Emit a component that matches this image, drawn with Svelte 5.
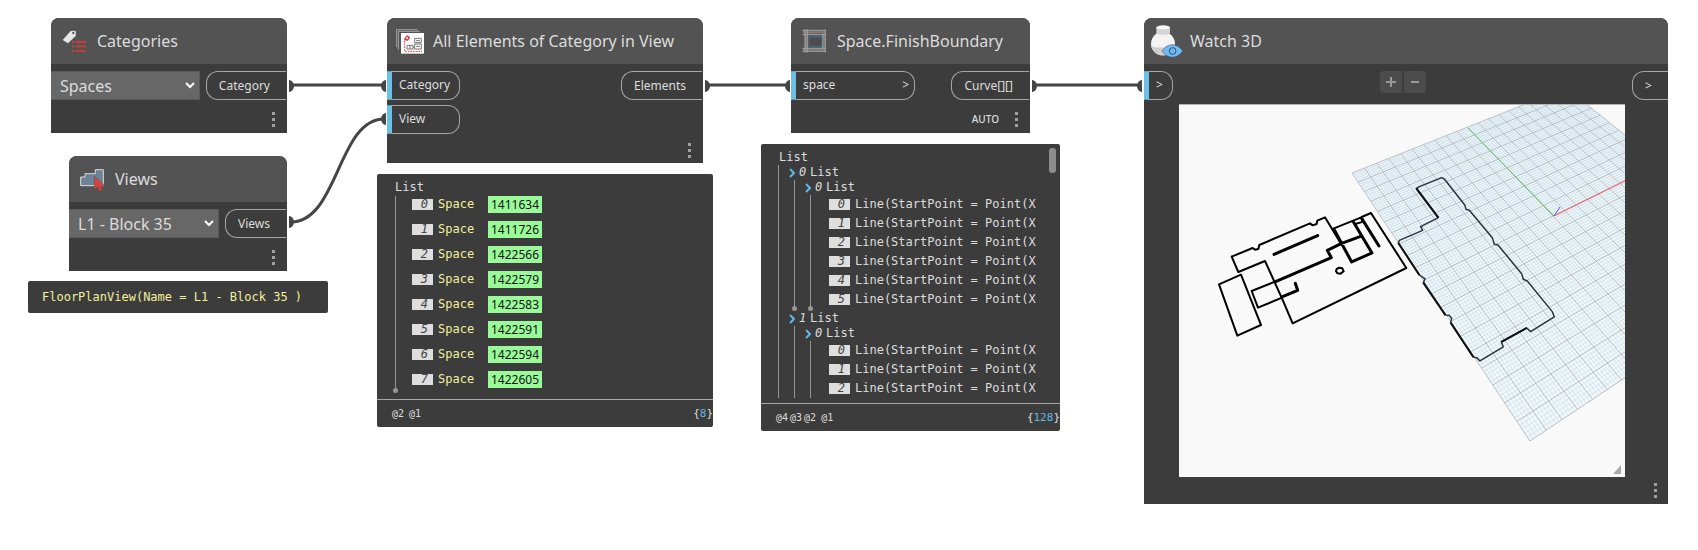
<script>
  const spaces = ['1411634', '1411726', '1422566', '1422579', '1422583', '1422591', '1422594', '1422605'];
  const curves = [
    { index: 0, items: [0, 1, 2, 3, 4, 5], closed: true },
    { index: 1, items: [0, 1, 2], closed: false },
  ];
  const lineText = 'Line(StartPoint = Point(X';

  // Ground grid: a unit square projected onto the four screen corners.
  const corners = [[1352, 172], [1530, 440], [1791, 266], [1566, 87]];

  function projector([p0, p1, p2, p3]) {
    const dx1 = p1[0] - p2[0], dx2 = p3[0] - p2[0], sx = p0[0] - p1[0] + p2[0] - p3[0];
    const dy1 = p1[1] - p2[1], dy2 = p3[1] - p2[1], sy = p0[1] - p1[1] + p2[1] - p3[1];
    const det = dx1 * dy2 - dx2 * dy1;
    const g = (sx * dy2 - dx2 * sy) / det;
    const h = (dx1 * sy - sx * dy1) / det;
    const a = p1[0] - p0[0] + g * p1[0], b = p3[0] - p0[0] + h * p3[0];
    const d = p1[1] - p0[1] + g * p1[1], e = p3[1] - p0[1] + h * p3[1];
    return (u, v) => {
      const w = g * u + h * v + 1;
      return ((a * u + b * v + p0[0]) / w).toFixed(1) + ' ' + ((d * u + e * v + p0[1]) / w).toFixed(1);
    };
  }

  const project = projector(corners);

  function gridPath(count, skip) {
    let d = '';
    for (let i = 0; i <= count; i++) {
      if (skip && i % skip === 0) continue;
      const t = i / count;
      d += `M${project(t, 0)}L${project(t, 1)}M${project(0, t)}L${project(1, t)}`;
    }
    return d;
  }

  const minorGrid = gridPath(100, 5);
  const majorGrid = gridPath(20, 0);
</script>

{#snippet more(label)}
  <button class="more" aria-label={label}><i></i><i></i><i></i></button>
{/snippet}

{#snippet chevron()}
  <svg class="caret" viewBox="0 0 10 7" aria-hidden="true"><path d="M1 1l4 4 4-4" fill="none" stroke="#fff" stroke-width="2" /></svg>
{/snippet}

{#snippet expander()}
  <svg class="expander" viewBox="0 0 6 10" aria-hidden="true"><path d="M1 1l4 4-4 4" fill="none" stroke="#5fb7e5" stroke-width="2" /></svg>
{/snippet}

<main class="workspace">
  <svg class="wires" aria-hidden="true">
    <g fill="none" stroke="#454545" stroke-width="3">
      <path d="M291 85H384" />
      <path d="M291 222C338 222 338 119 384 119" />
      <path d="M706 85H788" />
      <path d="M1033 85H1141" />
    </g>
    <g fill="#454545">
      <path d="M289 80a5 6 0 0 1 0 12zM289 216a5 6 0 0 1 0 12zM705 80a5 6 0 0 1 0 12zM1032 80a5 6 0 0 1 0 12z" />
      <path d="M386 80a5 6 0 0 0 0 12zM386 113a5 6 0 0 0 0 12zM790 80a5 6 0 0 0 0 12zM1142 80a5 6 0 0 0 0 12z" />
    </g>
  </svg>

  <section class="node categories">
    <header>
      <span class="icon">
        <svg width="24" height="24" viewBox="0 0 72 72" aria-hidden="true">
          <path d="M2 33L26 6l12-1 4 3-1 13L18 43z" fill="#e6e6e6" />
          <circle cx="34" cy="12" r="3.500" fill="#535353" />
          <path d="M30 36h7v6h-7zM42 36h30v6H42zM30 49h7v6h-7zM42 49h30v6H42zM30 63h7v6h-7zM42 63h30v6H42z" fill="#c23f3f" />
        </svg>
      </span>
      <h2>Categories</h2>
    </header>
    <div class="row">
      <label class="picker"><select aria-label="Category"><option>Spaces</option></select>{@render chevron()}</label>
      <span class="port out">Category</span>
    </div>
    <footer>{@render more('Categories options')}</footer>
  </section>

  <section class="node views">
    <header>
      <span class="icon">
        <svg width="24" height="24" viewBox="0 0 72 72" aria-hidden="true">
          <path d="M2 56V30h13V20h31V8h24v48z" fill="#6c8296" stroke="#dcdcdc" stroke-width="3" />
          <path d="M43 28v40l10-8 6 12 9-4-6-12h13z" fill="#d04540" stroke="#5a3a3a" stroke-width="1" />
        </svg>
      </span>
      <h2>Views</h2>
    </header>
    <div class="row">
      <label class="picker"><select aria-label="View"><option>L1 - Block 35</option></select>{@render chevron()}</label>
      <span class="port out">Views</span>
    </div>
    <footer>{@render more('Views options')}</footer>
  </section>

  <output class="preview">FloorPlanView(Name = L1 - Block 35 )</output>

  <section class="node elements">
    <header>
      <span class="icon">
        <svg width="28" height="25" viewBox="0 0 84 75" aria-hidden="true">
          <path d="M1 54V1h64M7 62V7h64" fill="none" stroke="#a5a5a5" stroke-width="3" />
          <path d="M4 58V4h64" fill="none" stroke="#777" stroke-width="2" />
          <path d="M15 12h69v62H15z" fill="#fff" />
          <path d="M24 34l2-8 8-8 9 8-8 9z" fill="#c94545" />
          <path d="M31 25h5v5h-5z" fill="#fff" />
          <path d="M26 36v31h52" fill="none" stroke="#c94545" stroke-width="3" stroke-dasharray="5 3" />
          <path d="M33 49h18v11H33zM42 49v11M56 28h20v13H56zM56 45h20v15H56zM60 35h12M60 52h12M51 55h5" fill="none" stroke="#777" stroke-width="3" />
        </svg>
      </span>
      <h2>All Elements of Category in View</h2>
    </header>
    <div class="row">
      <div class="inputs">
        <span class="port in">Category</span>
        <span class="port in">View</span>
      </div>
      <span class="port out">Elements</span>
    </div>
    <footer>{@render more('All Elements of Category in View options')}</footer>
  </section>

  <section class="panel spaces">
    <div class="title">List</div>
    <ul class="flat">
      {#each spaces as id, i}
        <li><span class="index">{i}</span><span class="kind">Space</span><a href="#{id}">{id}</a></li>
      {/each}
    </ul>
    <footer>
      <span class="levels"><span>@2</span><span class="last">@1</span></span>
      <span>{'{'}<b>8</b>{'}'}</span>
    </footer>
  </section>

  <section class="node boundary">
    <header>
      <span class="icon">
        <svg width="24" height="24" viewBox="0 0 72 72" aria-hidden="true">
          <path d="M3 10h66M3 62h66M66 3v66M12 3v66" stroke="#7c7c7c" stroke-width="7" />
          <path d="M1 4h70M1 17h70M1 58h70M1 67h70M9 1v70M16 1v70M70 1v70M62 17v41" fill="none" stroke="#a2a2a2" stroke-width="3" />
          <path d="M21 24h39v28H21z" fill="#4c4c4c" stroke="#3d78a8" stroke-width="3" stroke-dasharray="6 3" />
        </svg>
      </span>
      <h2>Space.FinishBoundary</h2>
    </header>
    <div class="row">
      <span class="port in wide">space <span>&gt;</span></span>
      <span class="port out">Curve[][]</span>
    </div>
    <footer><span class="lacing">AUTO</span>{@render more('Space.FinishBoundary options')}</footer>
  </section>

  <section class="panel curves">
    <div class="title">List</div>
    <ul class="tree">
      {#each curves as group}
        <li class="branch">
          <div class="entry">{@render expander()}<em>{group.index}</em>List</div>
          <ul class:closed={group.closed}>
            <li>
              <div class="entry">{@render expander()}<em>0</em>List</div>
              <ul class:closed={group.closed}>
                {#each group.items as item}
                  <li class="leaf"><span class="index">{item}</span>{lineText}</li>
                {/each}
              </ul>
            </li>
          </ul>
        </li>
      {/each}
    </ul>
    <span class="thumb"></span>
    <footer>
      <span class="levels"><span>@4</span><span>@3</span><span>@2</span><span class="last">@1</span></span>
      <span>{'{'}<b>128</b>{'}'}</span>
    </footer>
  </section>

  <section class="node watch">
    <header>
      <span class="icon">
        <svg width="32" height="33" viewBox="0 0 96 99" aria-hidden="true">
          <path d="M17 25C6 33 0 44 0 56c0 20 16 35 36 35s36-15 36-35c0-12-6-23-16-30z" fill="#f4f4f4" />
          <path d="M1 62c10 9 60 6 70 0-3 18-17 29-35 29S4 80 1 62z" fill="#cfcfcf" />
          <path d="M16 6v19c6 6 35 6 41 0V6z" fill="#d5d5d5" />
          <ellipse cx="36.500" cy="7" rx="20.500" ry="6" fill="#fafafa" />
          <path d="M33 78c18-25 44-25 62 0-18 25-44 25-62 0z" fill="#6cbcfa" stroke="#535353" stroke-width="2" />
          <circle cx="65" cy="78" r="10" fill="#6cbcfa" stroke="#3f4d59" stroke-width="3" />
        </svg>
      </span>
      <h2>Watch 3D</h2>
    </header>
    <div class="row">
      <span class="port in tiny">&gt;</span>
      <div class="zoom">
        <button aria-label="Zoom in"><svg viewBox="0 0 10 10"><path d="M5 0v10M0 5h10" stroke="#999" stroke-width="2" /></svg></button>
        <button aria-label="Zoom out"><svg viewBox="0 0 10 10"><path d="M1 5h8" stroke="#999" stroke-width="2" /></svg></button>
      </div>
      <span class="port out tiny">&gt;</span>
    </div>
    <svg class="scene" viewBox="1179 104 446 372" role="img" aria-label="3D preview">
      <polygon points={corners.map((c) => c.join(',')).join(' ')} fill="#f2f7fa" />
      <path d={minorGrid} fill="none" stroke="#bdd7e5" stroke-width="0.500" />
      <path d={majorGrid} fill="none" stroke="#8f9ba3" stroke-width="0.600" />
      <path d="M1554 215L1468 127" stroke="#5cb85c" />
      <path d="M1554 215L1625 180" stroke="#f55" />
      <path d="M1554 215L1560 206" stroke="#55f" />
      <g transform="translate(1340 100) scale(0.3333)" fill="none" stroke="#2c343b" stroke-width="4.500" stroke-linejoin="round">
        <path d="M229 262L240 256 305 230 313 234 375 313 378 325 388 328 457 410 463 430 474 432 545 518 550 535 562 540 637 632 643 648 572 692 560 681 484 723 490 738 420 780 410 770 400 768 332 665 335 652 327 643 316 642 250 545 255 534 238 522 175 426 178 418 248 388 242 377 295 350z" />
        <path d="M229 262L295 350M560 681L484 723M400 768L332 665M316 642L250 545M238 522L175 426" stroke="#111" stroke-width="6" />
      </g>
      <g transform="translate(1170 190) scale(0.3333)" fill="none" stroke="#000" stroke-width="6" stroke-linejoin="round" stroke-linecap="round">
        <path d="M185 197L248 171 255 176 265 174 268 162 420 97 428 103 440 99 442 89 465 79 513 158M185 197L205 243 285 210 336 322 368 397 709 231 603 66 575 78" />
        <path d="M147 280L213 251 273 402 202 434zM315 272L245 300 264 350 336 320" />
        <path d="M490 113L572 80 580 92 556 99M500 234L508 230 517 232 521 241 512 248 502 247 498 240z" />
        <path d="M312 190L443 134M315 273L484 200 472 178 513 158 572 136M336 318L383 298 376 277M492 115L545 213 606 186 550 92M577 85L627 165" stroke-width="9" />
      </g>
      <path d="M1621 464v9h-8z" fill="#aaa" />
    </svg>
    <footer>{@render more('Watch 3D options')}</footer>
  </section>
</main>

<style>
  :global(body) {
    margin: 0;
    background: #fff;
  }
  .workspace {
    position: relative;
    min-height: 100vh;
    min-width: 1680px;
    font-family: 'Noto Sans', sans-serif;
    color: #dcdcdc;
  }
  .workspace *,
  .workspace *::after {
    box-sizing: border-box;
  }
  .wires {
    position: absolute;
    inset: 0;
    width: 100%;
    height: 100%;
  }

  .node,
  .panel,
  .preview {
    position: absolute;
    background: #3c3c3c;
  }
  .node {
    border-radius: 8px 8px 0 0;
    display: flex;
    flex-direction: column;
  }
  .categories { left: 51px; top: 18px; width: 236px; }
  .views { left: 69px; top: 156px; width: 218px; }
  .elements { left: 387px; top: 18px; width: 316px; }
  .boundary { left: 791px; top: 18px; width: 239px; }
  .watch { left: 1144px; top: 18px; width: 524px; }
  .preview { left: 28px; top: 281px; }
  .panel.spaces { left: 377px; top: 174px; width: 336px; }
  .panel.curves { left: 761px; top: 144px; width: 299px; }

  .node header {
    display: flex;
    align-items: center;
    height: 46px;
    background: #535353;
    border-radius: 8px 8px 0 0;
  }
  .icon {
    display: grid;
    place-items: center;
    width: 46px;
  }
  h2 {
    margin: 0;
    font-size: 16px;
    line-height: 24px;
    font-weight: 400;
    white-space: nowrap;
  }
  .row {
    display: flex;
    align-items: flex-start;
    justify-content: space-between;
    gap: 6px;
    padding-top: 7px;
  }
  .picker {
    position: relative;
    flex: 1;
  }
  select {
    appearance: none;
    display: block;
    width: 100%;
    height: 29px;
    padding: 0 24px 0 9px;
    border: 1px solid #5a5a5a;
    border-left: 0;
    border-radius: 0;
    background: #676767;
    color: #dcdcdc;
    font: 16px 'Noto Sans', sans-serif;
  }
  .caret {
    position: absolute;
    right: 5px;
    top: 11px;
    width: 10px;
    height: 7px;
  }
  .port {
    display: flex;
    align-items: center;
    height: 29px;
    border: 1px solid #a6a6a6;
    font-size: 12px;
    line-height: 16px;
    white-space: nowrap;
  }
  .port.out {
    margin-right: 1px;
    padding: 0 16px 0 12px;
    border-right: 0;
    border-radius: 12px 0 0 12px;
  }
  .port.in {
    justify-content: space-between;
    padding: 0 9px 2px 7px;
    border-left: 5px solid #6ac0e7;
    border-radius: 0 12px 12px 0;
  }
  .port.wide {
    width: 124px;
    padding-right: 5px;
  }
  .port.in.tiny {
    width: 29px;
  }
  .port.out.tiny {
    width: 36px;
    margin-right: 0;
  }
  .inputs {
    display: grid;
    gap: 5px;
  }
  .node footer {
    display: flex;
    align-items: center;
    justify-content: flex-end;
    height: 33px;
    padding: 5px 8px 0 0;
  }
  .elements footer {
    height: 29px;
    padding-top: 3px;
  }
  .watch footer {
    height: 27px;
    padding: 0 7px 0 0;
  }
  .lacing {
    margin-right: 12px;
    font-size: 10px;
    font-weight: 500;
    line-height: 14px;
  }
  button {
    border: 0;
    padding: 0;
    cursor: pointer;
  }
  .more {
    display: grid;
    gap: 3px;
    justify-items: center;
    width: 11px;
    background: none;
  }
  .more i {
    width: 3px;
    height: 3px;
    background: #a0a0a0;
  }
  .zoom {
    display: flex;
    gap: 2px;
  }
  .zoom button {
    display: grid;
    place-items: center;
    width: 22px;
    height: 22px;
    background: #4c4c4c;
    border-radius: 4px 0 0 4px;
  }
  .zoom button + button {
    border-radius: 0 4px 4px 0;
  }
  .zoom svg {
    width: 10px;
    height: 10px;
  }
  .scene {
    display: block;
    margin: 4px 43px 0 35px;
    background: #f9f9f9;
    border-top: 1px solid #b4b4b4;
  }

  .panel,
  .preview {
    border-radius: 2px;
    font-family: 'DejaVu Sans Mono', monospace;
    font-size: 12px;
    line-height: 15px;
    white-space: nowrap;
  }
  .preview {
    width: 300px;
    padding: 9px 14px 8px;
    color: #f2f09a;
  }
  .panel {
    padding-top: 6px;
  }
  .title {
    padding-left: 18px;
  }
  ul {
    list-style: none;
    margin: 0;
    padding: 0;
    position: relative;
    border-left: 1px solid #969696;
  }
  .flat {
    display: grid;
    gap: 8px;
    margin: 1px 0 8px 18px;
    padding: 0 0 3px 16px;
  }
  .flat li {
    display: flex;
    align-items: center;
    height: 17px;
  }
  .index {
    width: 21px;
    height: 11px;
    margin-right: 5px;
    padding-right: 5px;
    background: #dedede;
    color: #444;
    font-style: italic;
    line-height: 11px;
    text-align: right;
  }
  .kind {
    width: 50px;
    color: #f2f09a;
  }
  .flat a {
    padding: 0 3px;
    background: #98fb98;
    color: #111;
    font-family: 'Noto Sans', sans-serif;
    font-size: 12px;
    line-height: 17px;
    text-decoration: none;
  }
  .flat::after,
  .closed::after {
    content: '';
    position: absolute;
    left: -3px;
    bottom: -2px;
    width: 5px;
    height: 5px;
    border-radius: 50%;
    background: #969696;
  }
  .tree {
    margin: 0 0 5px 17px;
  }
  .tree ul {
    margin-left: 15px;
  }
  .branch + .branch {
    padding-top: 2px;
  }
  .entry {
    display: flex;
    align-items: center;
    height: 15px;
    padding-left: 10px;
  }
  .expander {
    width: 6px;
    height: 10px;
    margin-right: 4px;
  }
  em {
    width: 11px;
  }
  .leaf {
    display: flex;
    align-items: center;
    height: 19px;
    padding-left: 18px;
  }
  .thumb {
    position: absolute;
    right: 4px;
    top: 4px;
    width: 7px;
    height: 25px;
    border-radius: 3px;
    background: #8c8c8c;
  }
  .panel footer {
    display: flex;
    align-items: center;
    justify-content: space-between;
    height: 28px;
    padding-left: 15px;
    border-top: 1px solid #a6a6a6;
    font-size: 11px;
  }
  .levels {
    display: flex;
    gap: 2px;
    font-size: 10px;
  }
  .last {
    margin-left: 3px;
  }
  b {
    color: #5fb7e5;
    font-weight: 400;
  }
</style>
